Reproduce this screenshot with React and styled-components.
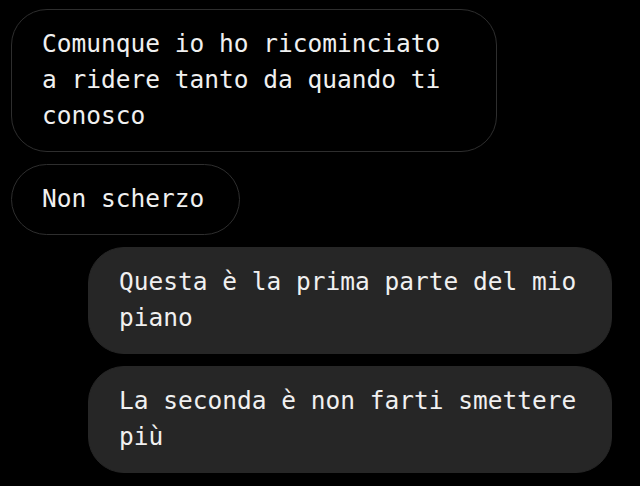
import React from 'react';
import styled, { createGlobalStyle } from 'styled-components';

const messages = [
    { id: 1, mine: false, width: 486, lines: ['Comunque io ho ricominciato', 'a ridere tanto da quando ti', 'conosco'] },
    { id: 2, mine: false, width: 229, lines: ['Non scherzo'] },
    { id: 3, mine: true, width: 524, lines: ['Questa è la prima parte del mio', 'piano'] },
    { id: 4, mine: true, width: 524, lines: ['La seconda è non farti smettere', 'più'] },
];

const App = () => {
    return (
        <>
            <GlobalStyle />
            <Thread>
                {messages.map((m) => (
                    <Bubble key={m.id} $mine={m.mine} $width={m.width}>
                        {m.lines.join('\n')}
                    </Bubble>
                ))}
            </Thread>
        </>
    );
};

export default App;

const GlobalStyle = createGlobalStyle`
    html, body {
        margin: 0;
        padding: 0;
        background: #000;
    }
    body {
        width: 640px;
        height: 486px;
        overflow: hidden;
    }
`;

const Thread = styled.div`
    display: flex;
    flex-direction: column;
    gap: 12px;
    padding: 9px 28px 0 11px;
    box-sizing: border-box;
    width: 640px;
`;

const Bubble = styled.div`
    box-sizing: border-box;
    width: ${(p) => p.$width}px;
    align-self: ${(p) => (p.$mine ? 'flex-end' : 'flex-start')};
    padding: 16px 20px 17px 30px;
    border-radius: 36px;
    background: ${(p) => (p.$mine ? '#262626' : '#000')};
    border: 1px solid ${(p) => (p.$mine ? '#262626' : '#2e2e2e')};
    color: #f0f0f0;
    font-family: 'DejaVu Sans Mono', monospace;
    font-size: 24.5px;
    line-height: 36px;
    white-space: pre-line;
`;
